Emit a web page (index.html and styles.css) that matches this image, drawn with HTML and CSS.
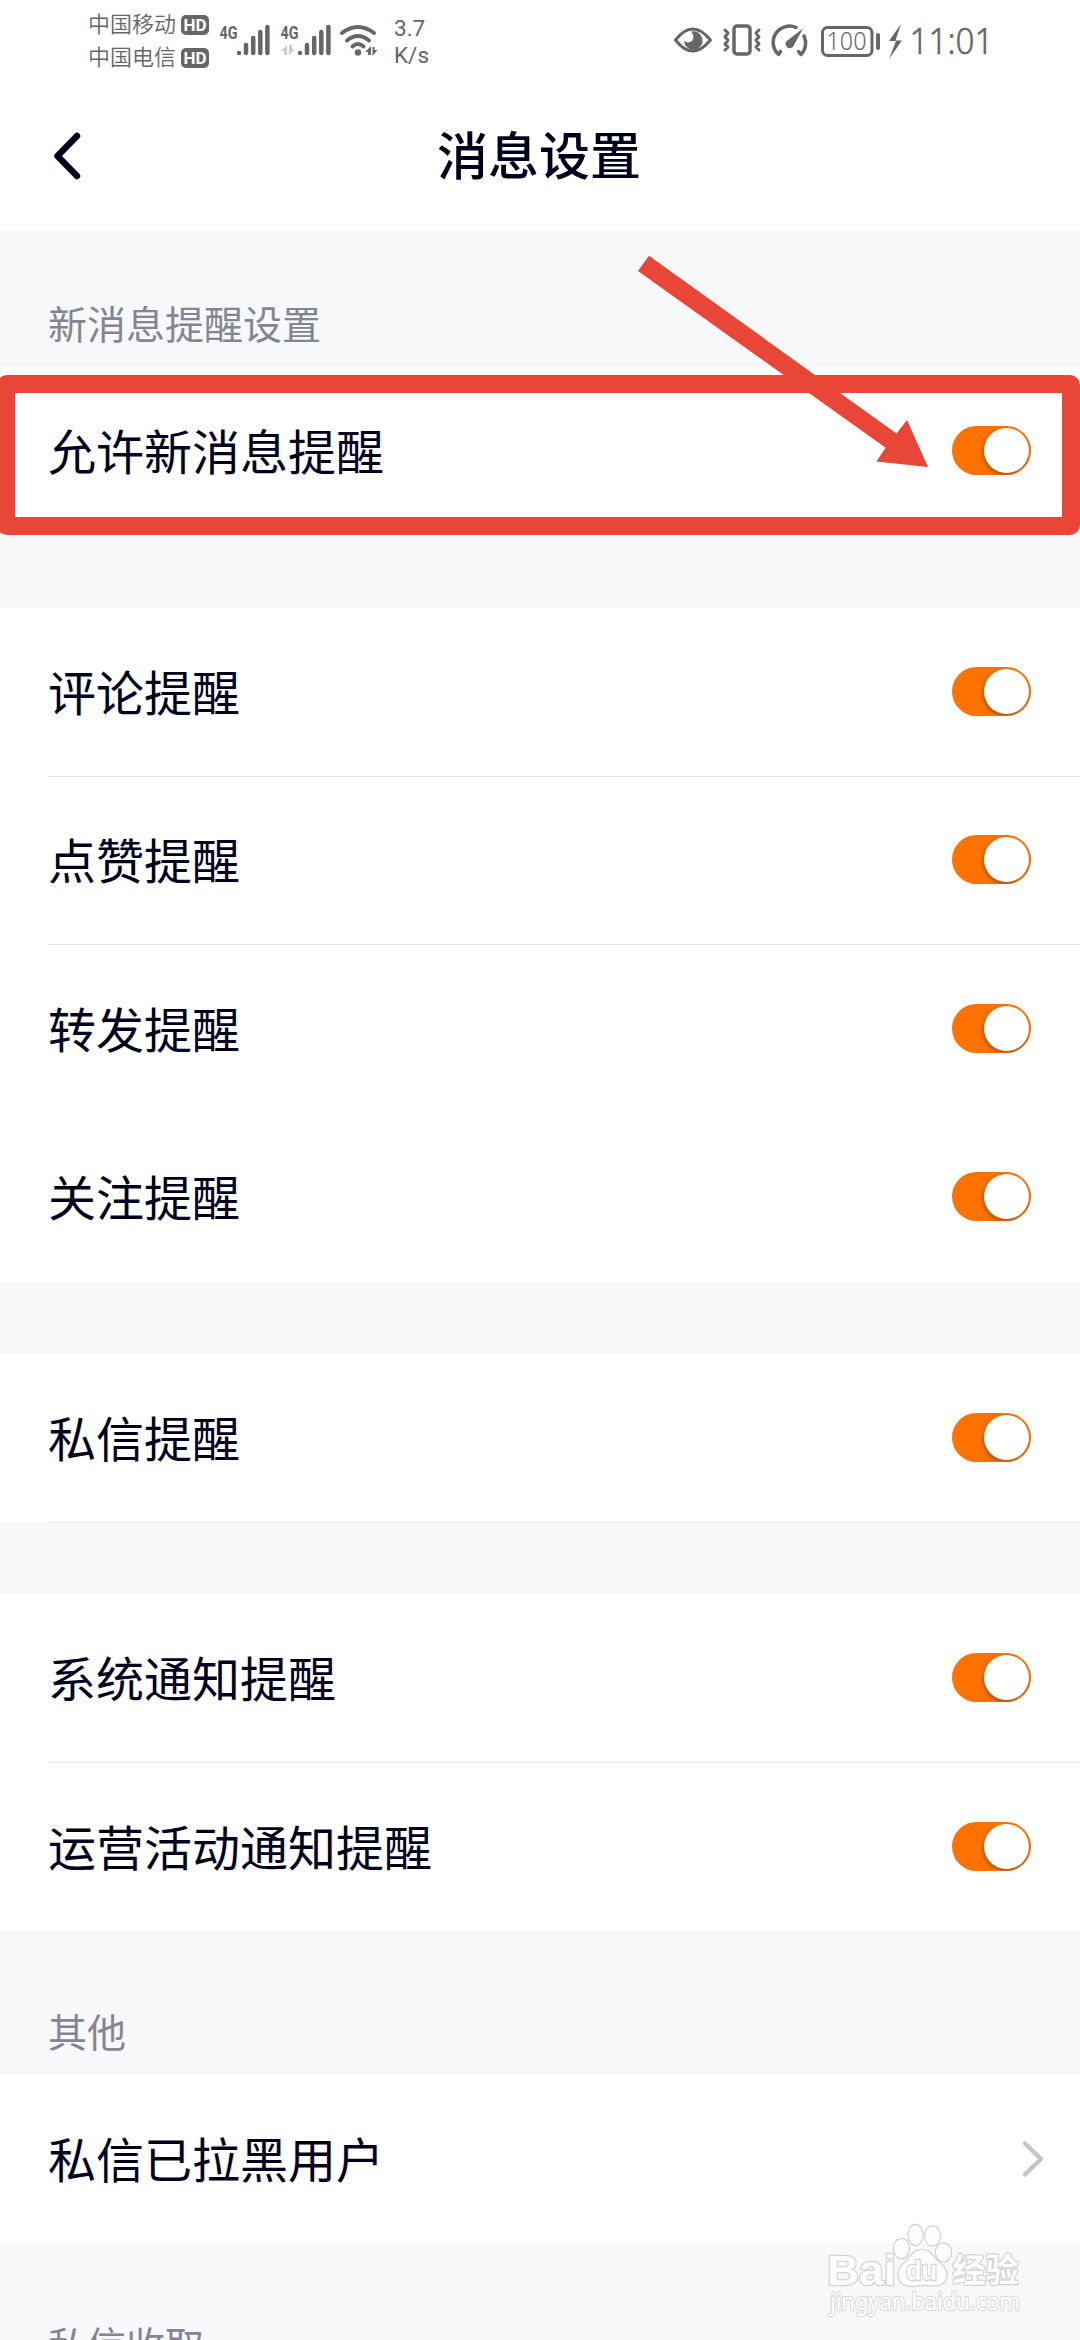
FILE: index.html
```html
<!DOCTYPE html>
<html lang="zh-CN">
<head>
<meta charset="utf-8">
<title>消息设置</title>
<link rel="stylesheet" href="styles.css">
</head>
<body>
<main class="screen">
  <header class="top">
    <div class="status">
      <div class="carriers">
        <div class="carrier"><span>中国移动</span><b class="hd">HD</b></div>
        <div class="carrier"><span>中国电信</span><b class="hd">HD</b></div>
      </div>
      <svg class="signals" width="162" height="80" viewBox="216 0 162 80">
        <g class="net">
          <text x="219.500" y="38.500" textLength="18" lengthAdjust="spacingAndGlyphs">4G</text>
          <text x="280.500" y="38.500" textLength="18" lengthAdjust="spacingAndGlyphs">4G</text>
        </g>
        <g class="bars">
          <path d="M239 53v0M246 53V45M253.200 53V38M260.300 53V32M267.400 53V27"/>
          <path d="M300 53v0M307 53V45M314.200 53V38M321.300 53V32M328.400 53V27"/>
        </g>
        <path class="faint" d="M281 51l6-6v10h-3v-4zM289 45h3v4h3l-6 6z"/>
        <g class="wifi">
          <path d="M342 33Q358 21 374 33M347 40.500Q358 31.500 369 40.500M352.500 46.500Q358 41.500 363.500 46.500"/>
        </g>
        <circle cx="358" cy="52.500" r="3.200" class="ink"/>
        <path class="ink" d="M365 52l6-6v9h-3v-3zM372.500 47h2v3h3l-5 6z"/>
      </svg>
      <div class="speed"><span>3.7</span><span>K/s</span></div>
      <svg class="indicators" width="324" height="80" viewBox="672 0 324 80">
        <path class="line" stroke-width="3" d="M675.500 40Q692.500 18 710.500 40Q692.500 62 675.500 40Z"/>
        <path class="ink" d="M691 31.500A9.300 9.300 0 1 1 684 41Q688 44 692.500 40.500Q695 36 691 31.500Z"/>
        <rect class="line" stroke-width="3.500" x="734" y="26" width="16" height="28" rx="3"/>
        <path class="line" stroke-width="3" d="M725 30l3 3-3 4 3 3-3 4 3 3-3 3M759 30l-3 3 3 4-3 3 3 4-3 3 3 3"/>
        <path class="line" stroke-width="3.500" d="M796 27.500A16.300 16.300 0 0 0 778.500 54.500L780.500 51.500M804 36A16.300 16.300 0 0 1 801 54.500L798.500 51.500"/>
        <path class="ink" d="M803 28.500L794 45A4.300 4.300 0 1 1 788 40Z"/>
        <rect class="line" stroke-width="3" x="822.500" y="27.500" width="49.500" height="28" rx="5"/>
        <path class="line" stroke-width="4" d="M878 35v13"/>
        <text class="charge" x="826.500" y="50" textLength="40" lengthAdjust="spacingAndGlyphs">100</text>
        <path class="ink" d="M901 24L889 41H896L889 59L902 40.500H895.500Z"/>
        <text class="clock" x="909.500" y="54" textLength="84" lengthAdjust="spacingAndGlyphs">11:01</text>
      </svg>
    </div>
    <div class="nav">
      <svg class="back" width="32" height="52" viewBox="0 0 32 52"><path d="M28 6L8.500 26L28 46"/></svg>
      <h1>消息设置</h1>
    </div>
  </header>

  <h2 class="label first">新消息提醒设置</h2>
  <section class="group">
    <div class="row"><span>允许新消息提醒</span><i class="switch"></i></div>
  </section>
  <section class="group spaced">
    <div class="row ruled"><span>评论提醒</span><i class="switch"></i></div>
    <div class="row ruled"><span>点赞提醒</span><i class="switch"></i></div>
    <div class="row"><span>转发提醒</span><i class="switch"></i></div>
    <div class="row"><span>关注提醒</span><i class="switch"></i></div>
  </section>
  <section class="group spaced">
    <div class="row ruled"><span>私信提醒</span><i class="switch"></i></div>
  </section>
  <section class="group spaced">
    <div class="row ruled"><span>系统通知提醒</span><i class="switch"></i></div>
    <div class="row"><span>运营活动通知提醒</span><i class="switch"></i></div>
  </section>
  <h2 class="label">其他</h2>
  <section class="group">
    <div class="row"><span>私信已拉黑用户</span><svg class="next" width="24" height="40" viewBox="0 0 24 40"><path d="M4 4.500L20 20L4 35.500"/></svg></div>
  </section>
  <h2 class="label">私信收取</h2>

  <div class="highlight"></div>
  <svg class="arrow" width="292" height="214" viewBox="637 254 292 214"><path d="M649 255.700L896.500 433.500L907 420L928 467L876.300 461.500L885.700 447.700L638 271Z"/></svg>
  <svg class="watermark" width="204" height="100" viewBox="822 2220 204 100">
    <g class="mark">
      <text class="bai" x="827" y="2284.500" textLength="69" lengthAdjust="spacingAndGlyphs">Bai</text>
      <ellipse cx="901.500" cy="2248.500" rx="7.500" ry="9.500"/>
      <ellipse cx="915.500" cy="2235" rx="7" ry="10"/>
      <ellipse cx="932.500" cy="2236" rx="7.500" ry="9.500"/>
      <ellipse cx="943.500" cy="2252.500" rx="7.500" ry="9"/>
      <path d="M922 2250C930 2250 932 2256 938 2262C946 2268 949 2275 944 2282C938 2288 930 2284 922 2285C914 2285 908 2288 901 2282C896 2275 899 2267 906 2262C912 2256 914 2250 922 2250Z"/>
      <text class="du" x="906" y="2280" textLength="31" lengthAdjust="spacingAndGlyphs">du</text>
      <text class="jy" x="952.500" y="2281.500" textLength="66" lengthAdjust="spacingAndGlyphs">经验</text>
      <text class="url" x="830" y="2310" textLength="190" lengthAdjust="spacingAndGlyphs">jingyan.baidu.com</text>
    </g>
  </svg>
</main>
</body>
</html>
```
FILE: styles.css
```css
* { box-sizing: border-box; }
body { margin: 0; background: #f6f8fa; }
.screen {
  position: relative;
  width: 1080px;
  height: 2340px;
  overflow: hidden;
  background: #f6f8fa;
  color: #00001e;
  font-family: "Noto Sans CJK SC", sans-serif;
}
.top { height: 231px; background: #fff; }
.status { display: flex; height: 80px; padding: 0 84px 0 88px; color: #666; }
.carriers { width: 128px; padding-top: 7px; }
.carrier { display: flex; align-items: center; gap: 5px; height: 33px; font-size: 22px; line-height: 33px; font-weight: 350; white-space: nowrap; }
.carrier span { margin-top: -2px; }
.hd {
  width: 28px;
  height: 20px;
  margin-top: 2px;
  border-radius: 5px;
  background: #666;
  color: #fff;
  font: bold 17px/20px "Roboto", sans-serif;
  text-align: center;
}
.speed { display: flex; flex-direction: column; width: 60px; padding: 15px 0 0 16px; font: 400 22.500px/27px "Roboto", sans-serif; }
.signals, .indicators { flex: none; }
.indicators { margin-left: auto; }
.net text { font: bold 19px "Roboto", sans-serif; fill: #666; }
.bars path, .wifi path, .line { fill: none; stroke: #666; stroke-linecap: round; stroke-linejoin: round; }
.bars path { stroke-width: 4.500px; }
.wifi path { stroke-width: 4px; }
.ink { fill: #666; }
.faint { fill: #ccc; }
.charge { font: 300 25px "Noto Sans", sans-serif; fill: #666; }
.clock { font: 300 37px "Noto Sans", sans-serif; fill: #666; stroke: #666; stroke-width: .5px; }

.nav { display: grid; grid-template-columns: 1fr auto 1fr; align-items: center; height: 151px; padding: 0 51px 0 49px; }
.back path { fill: none; stroke: #00001e; stroke-width: 6.500px; stroke-linecap: round; stroke-linejoin: round; }
h1 { margin: -6px 0 0; font-size: 51px; line-height: 74px; font-weight: 500; }

.label { height: 144px; margin: 0; padding: 71px 0 0 48px; font-size: 39px; line-height: 56px; font-weight: 400; color: #858592; }
.label.first { height: 136px; padding-top: 63px; }
.spaced { margin-top: 72px; }
.row {
  position: relative;
  display: flex;
  align-items: center;
  justify-content: space-between;
  height: 168.500px;
  padding: 0 49px 0 48px;
  background: #fff;
  font-size: 48px;
  line-height: 70px;
}
.row span { margin-top: -4px; }
.ruled::after { content: ""; position: absolute; left: 48px; right: 0; bottom: -0.500px; height: 1px; background: #e8e8ea; z-index: 1; }
.switch {
  display: flex;
  justify-content: flex-end;
  width: 79px;
  height: 49px;
  margin-bottom: 1px;
  padding: 2px;
  border-radius: 25px;
  background: #ff7200;
}
.switch::before { content: ""; width: 45px; height: 45px; border-radius: 50%; background: #fff; box-shadow: -1px 2px 4px rgba(90, 60, 30, .55); clip-path: inset(-2px -2px -2px -9px round 24px); }
.next { margin-right: -14px; }
.next path { fill: none; stroke: #c5c5c5; stroke-width: 4.500px; stroke-linecap: round; stroke-linejoin: round; }

.highlight { position: absolute; left: -3px; top: 375px; width: 1083px; height: 160px; border: 18px solid #e94638; border-radius: 10px; }
.arrow { position: absolute; left: 637px; top: 254px; fill: #e94638; }
.watermark { position: absolute; left: 822px; top: 2220px; }
.mark { fill: #fdfdfd; stroke: #d3d4d6; stroke-width: 2.500px; paint-order: stroke; stroke-linejoin: round; }
.bai { font: bold 43px "Liberation Sans", sans-serif; }
.du { font: bold 28px "Liberation Sans", sans-serif; }
.jy { font: bold 33px "Noto Sans CJK SC", sans-serif; }
.url { font: 24px "Noto Sans", sans-serif; stroke: #dcdddf; }
```
